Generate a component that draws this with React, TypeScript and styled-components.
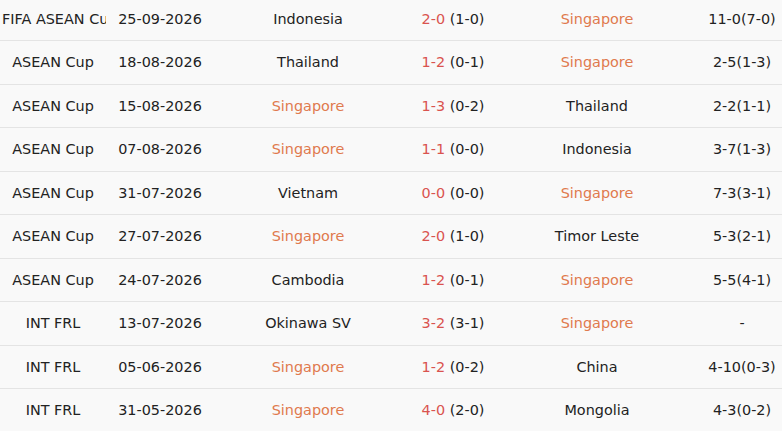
import styled, { createGlobalStyle } from "styled-components";

type Match = {
  league: string;
  date: string;
  home: string;
  score: string;
  half: string;
  away: string;
  handicap: string;
};

const TEAM = "Singapore";

const matches: Match[] = [
  { league: "FIFA ASEAN Cup", date: "25-09-2026", home: "Indonesia", score: "2-0", half: "(1-0)", away: "Singapore", handicap: "11-0(7-0)" },
  { league: "ASEAN Cup", date: "18-08-2026", home: "Thailand", score: "1-2", half: "(0-1)", away: "Singapore", handicap: "2-5(1-3)" },
  { league: "ASEAN Cup", date: "15-08-2026", home: "Singapore", score: "1-3", half: "(0-2)", away: "Thailand", handicap: "2-2(1-1)" },
  { league: "ASEAN Cup", date: "07-08-2026", home: "Singapore", score: "1-1", half: "(0-0)", away: "Indonesia", handicap: "3-7(1-3)" },
  { league: "ASEAN Cup", date: "31-07-2026", home: "Vietnam", score: "0-0", half: "(0-0)", away: "Singapore", handicap: "7-3(3-1)" },
  { league: "ASEAN Cup", date: "27-07-2026", home: "Singapore", score: "2-0", half: "(1-0)", away: "Timor Leste", handicap: "5-3(2-1)" },
  { league: "ASEAN Cup", date: "24-07-2026", home: "Cambodia", score: "1-2", half: "(0-1)", away: "Singapore", handicap: "5-5(4-1)" },
  { league: "INT FRL", date: "13-07-2026", home: "Okinawa SV", score: "3-2", half: "(3-1)", away: "Singapore", handicap: "-" },
  { league: "INT FRL", date: "05-06-2026", home: "Singapore", score: "1-2", half: "(0-2)", away: "China", handicap: "4-10(0-3)" },
  { league: "INT FRL", date: "31-05-2026", home: "Singapore", score: "4-0", half: "(2-0)", away: "Mongolia", handicap: "4-3(0-2)" },
];

const GlobalStyle = createGlobalStyle`
  html, body {
    margin: 0;
    padding: 0;
    overflow: hidden;
    background: #f9f9f9;
  }
  body {
    font-family: "DejaVu Sans", Verdana, sans-serif;
    font-size: 14.4px;
    color: #222;
  }
`;

const Table = styled.div`
  width: 794px;
  margin-top: -2.5px;
  background: #f9f9f9;
`;

const Row = styled.div`
  display: grid;
  grid-template-columns: 106px 108px 188px 102px 186px 104px;
  height: 42.5px;
  align-items: center;
  border-bottom: 1px solid #e4e4e4;
`;

const Cell = styled.div<{ $accent?: boolean }>`
  padding: 0 2px;
  text-align: center;
  white-space: nowrap;
  overflow: hidden;
  color: ${(p) => (p.$accent ? "#e07a4e" : "#222")};
`;

const Score = styled.span`
  color: #d9534f;
`;

export default function App() {
  return (
    <>
      <GlobalStyle />
      <Table>
        {matches.map((m, i) => (
          <Row key={i}>
            <Cell>{m.league}</Cell>
            <Cell>{m.date}</Cell>
            <Cell $accent={m.home === TEAM}>{m.home}</Cell>
            <Cell>
              <Score>{m.score}</Score> {m.half}
            </Cell>
            <Cell $accent={m.away === TEAM}>{m.away}</Cell>
            <Cell>{m.handicap}</Cell>
          </Row>
        ))}
      </Table>
    </>
  );
}
